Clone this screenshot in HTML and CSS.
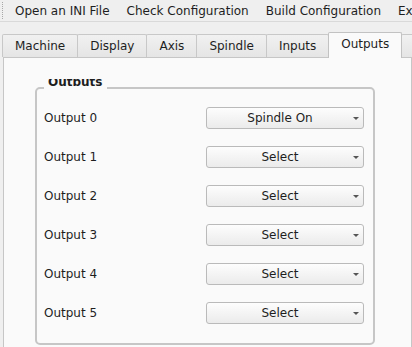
FILE: index.html
```html
<!DOCTYPE html>
<html lang="en">
<head>
  <meta charset="UTF-8">
  <title>Outputs</title>
  <link rel="stylesheet" href="styles.css">
</head>
<body>

<div class="menubar">
  <span class="grip"></span>
  <span class="menu-item">Open an INI File</span>
  <span class="menu-item">Check Configuration</span>
  <span class="menu-item">Build Configuration</span>
  <span class="menu-item">Exit</span>
</div>

<div class="tabs">
  <div class="tab">Machine</div>
  <div class="tab">Display</div>
  <div class="tab">Axis</div>
  <div class="tab">Spindle</div>
  <div class="tab">Inputs</div>
  <div class="tab active">Outputs</div>
  <div class="tab">Tool Changer</div>
</div>

<div class="pane">
  <div class="group">
    <div class="group-title"><span>Outputs</span></div>

    <div class="row">
      <span class="label">Output 0</span>
      <div class="combo"><span class="combo-text">Spindle On</span><span class="combo-arrow"></span></div>
    </div>
    <div class="row">
      <span class="label">Output 1</span>
      <div class="combo"><span class="combo-text">Select</span><span class="combo-arrow"></span></div>
    </div>
    <div class="row">
      <span class="label">Output 2</span>
      <div class="combo"><span class="combo-text">Select</span><span class="combo-arrow"></span></div>
    </div>
    <div class="row">
      <span class="label">Output 3</span>
      <div class="combo"><span class="combo-text">Select</span><span class="combo-arrow"></span></div>
    </div>
    <div class="row">
      <span class="label">Output 4</span>
      <div class="combo"><span class="combo-text">Select</span><span class="combo-arrow"></span></div>
    </div>
    <div class="row">
      <span class="label">Output 5</span>
      <div class="combo"><span class="combo-text">Select</span><span class="combo-arrow"></span></div>
    </div>
  </div>
</div>

</body>
</html>
```

FILE: styles.css
```css
html, body {
  margin: 0;
  height: 100%;
}

body {
  background: #efefef;
  font-family: "DejaVu Sans", sans-serif;
  font-size: 12px;
  color: #1e1e1e;
  overflow: hidden;
}

/* menu bar */
.menubar {
  display: flex;
  align-items: center;
  gap: 1px;
  height: 21px;
  padding-left: 2px;
  border-bottom: 1px solid #d9d9d9;
  white-space: nowrap;
}

.grip {
  width: 0;
  height: 17px;
  border-left: 1px dotted #a8a8a8;
  margin-right: 3px;
}

.menu-item {
  padding: 0 8px;
}

/* tabs */
.tabs {
  display: flex;
  align-items: flex-end;
  height: 25px;
  margin-top: 10px;
  padding-left: 2px;
  white-space: nowrap;
  position: relative;
  z-index: 1;
}

.tab {
  height: 22px;
  line-height: 22px;
  padding: 0 12px;
  margin-right: -1px;
  border: 1px solid #c8c8c8;
  border-bottom: none;
  border-radius: 2px 2px 0 0;
  background: linear-gradient(#f1f1f1, #e5e5e5);
}

.tab.active {
  height: 25px;
  line-height: 23px;
  margin-bottom: -1px;
  border-color: #c2c2c2;
  background: #fafafa;
  position: relative;
  z-index: 2;
}

/* tab page */
.pane {
  margin-left: 3px;
  height: 400px;
  padding: 29px 0 0 31px;
  border: 1px solid #c6c6c6;
  background: #fafafa;
}

.group {
  position: relative;
  box-sizing: border-box;
  width: 340px;
  padding: 18px 9px 19px 7px;
  border: 2px solid #c6c6c6;
  border-radius: 5px;
  display: flex;
  flex-direction: column;
  gap: 17px;
}

.group-title {
  position: absolute;
  left: 7px;
  top: -10px;
  height: 12px;
  padding: 0 4px;
  background: #fafafa;
}

.group-title span {
  display: block;
  height: 7px;
  line-height: 6px;
  overflow: hidden;
  font-weight: bold;
}

.row {
  display: flex;
  align-items: center;
  justify-content: space-between;
  height: 22px;
}

.combo {
  box-sizing: border-box;
  width: 158px;
  height: 22px;
  display: flex;
  align-items: center;
  border: 1px solid #bababa;
  border-radius: 3px;
  background: linear-gradient(#fdfdfd, #ebebeb);
}

.combo-text {
  flex: 1;
  text-align: center;
}

.combo-arrow {
  width: 0;
  height: 0;
  margin-right: 4px;
  border-left: 3px solid transparent;
  border-right: 3px solid transparent;
  border-top: 3px solid #555;
}
```
